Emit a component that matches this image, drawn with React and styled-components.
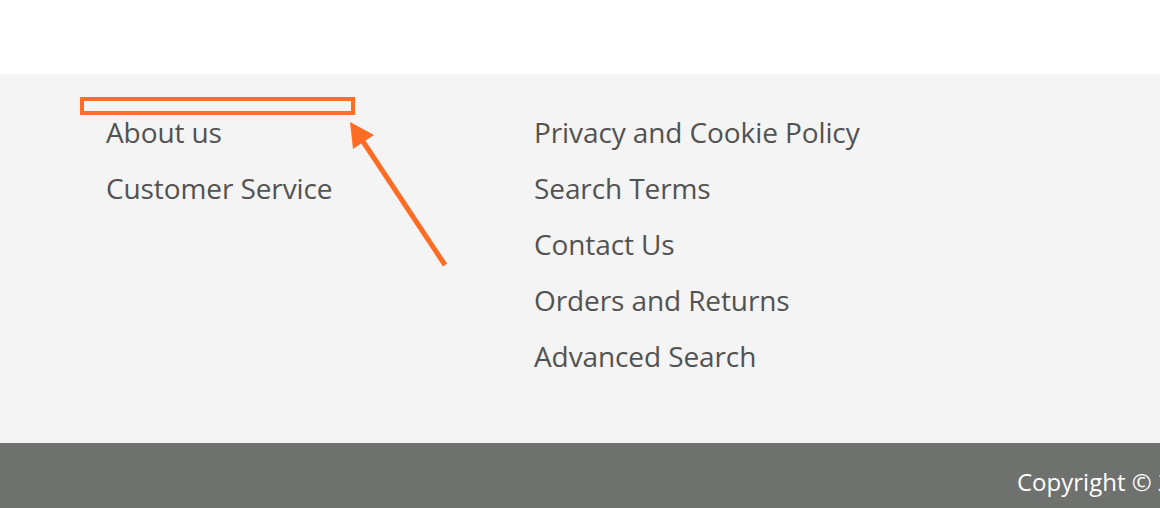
import React from "react";
import styled, { createGlobalStyle } from "styled-components";

const Global = createGlobalStyle`
  html, body { margin: 0; padding: 0; background: #ffffff; }
  body { font-family: "Open Sans", "Noto Sans", sans-serif; overflow: hidden; }
`;

const Page = styled.div`
  position: relative;
  width: 1160px;
  height: 508px;
  padding-top: 74px;
  box-sizing: border-box;
  display: flex;
  flex-direction: column;
`;

const Footer = styled.footer`
  background: #f4f4f4;
  height: 369px;
  flex-shrink: 0;
  box-sizing: border-box;
  padding: 30px 0 0 106px;
  display: flex;
`;

const LinkList = styled.ul`
  list-style: none;
  margin: 0;
  padding: 0;
  width: ${(p) => p.$width}px;
  display: flex;
  flex-direction: column;
`;

const LinkItem = styled.li`
  font-size: 28px;
  line-height: 56px;
  color: #525252;
  white-space: nowrap;
  letter-spacing: -0.1px;
`;

const Copyright = styled.div`
  background: #6e716e;
  height: 65px;
  box-sizing: border-box;
  padding: 12px 0 0 1017px;
  display: flex;
  align-items: center;
  overflow: hidden;
  white-space: nowrap;
  color: #ffffff;
  font-size: 24px;
  font-weight: 500;
`;

const Annotation = styled.svg`
  position: absolute;
  left: 0;
  top: 0;
  pointer-events: none;
`;

const leftLinks = ["About us", "Customer Service"];
const rightLinks = [
  "Privacy and Cookie Policy",
  "Search Terms",
  "Contact Us",
  "Orders and Returns",
  "Advanced Search",
];

export default function App() {
  return (
    <>
      <Global />
      <Page>
        <Footer>
          <LinkList $width={428}>
            {leftLinks.map((l) => (
              <LinkItem key={l}>{l}</LinkItem>
            ))}
          </LinkList>
          <LinkList $width={500}>
            {rightLinks.map((l) => (
              <LinkItem key={l}>{l}</LinkItem>
            ))}
          </LinkList>
        </Footer>
        <Copyright>Copyright © 2013-present Magento, Inc. All rights reserved.</Copyright>
        <Annotation width="1160" height="508" viewBox="0 0 1160 508">
          <rect x="82" y="99" width="271" height="14" fill="none" stroke="#ff6c23" strokeWidth="4" />
          <line x1="445" y1="265" x2="362" y2="140" stroke="#ff6c23" strokeWidth="5" />
          <polygon points="350,122 374,135 353,149" fill="#ff6c23" />
        </Annotation>
      </Page>
    </>
  );
}
